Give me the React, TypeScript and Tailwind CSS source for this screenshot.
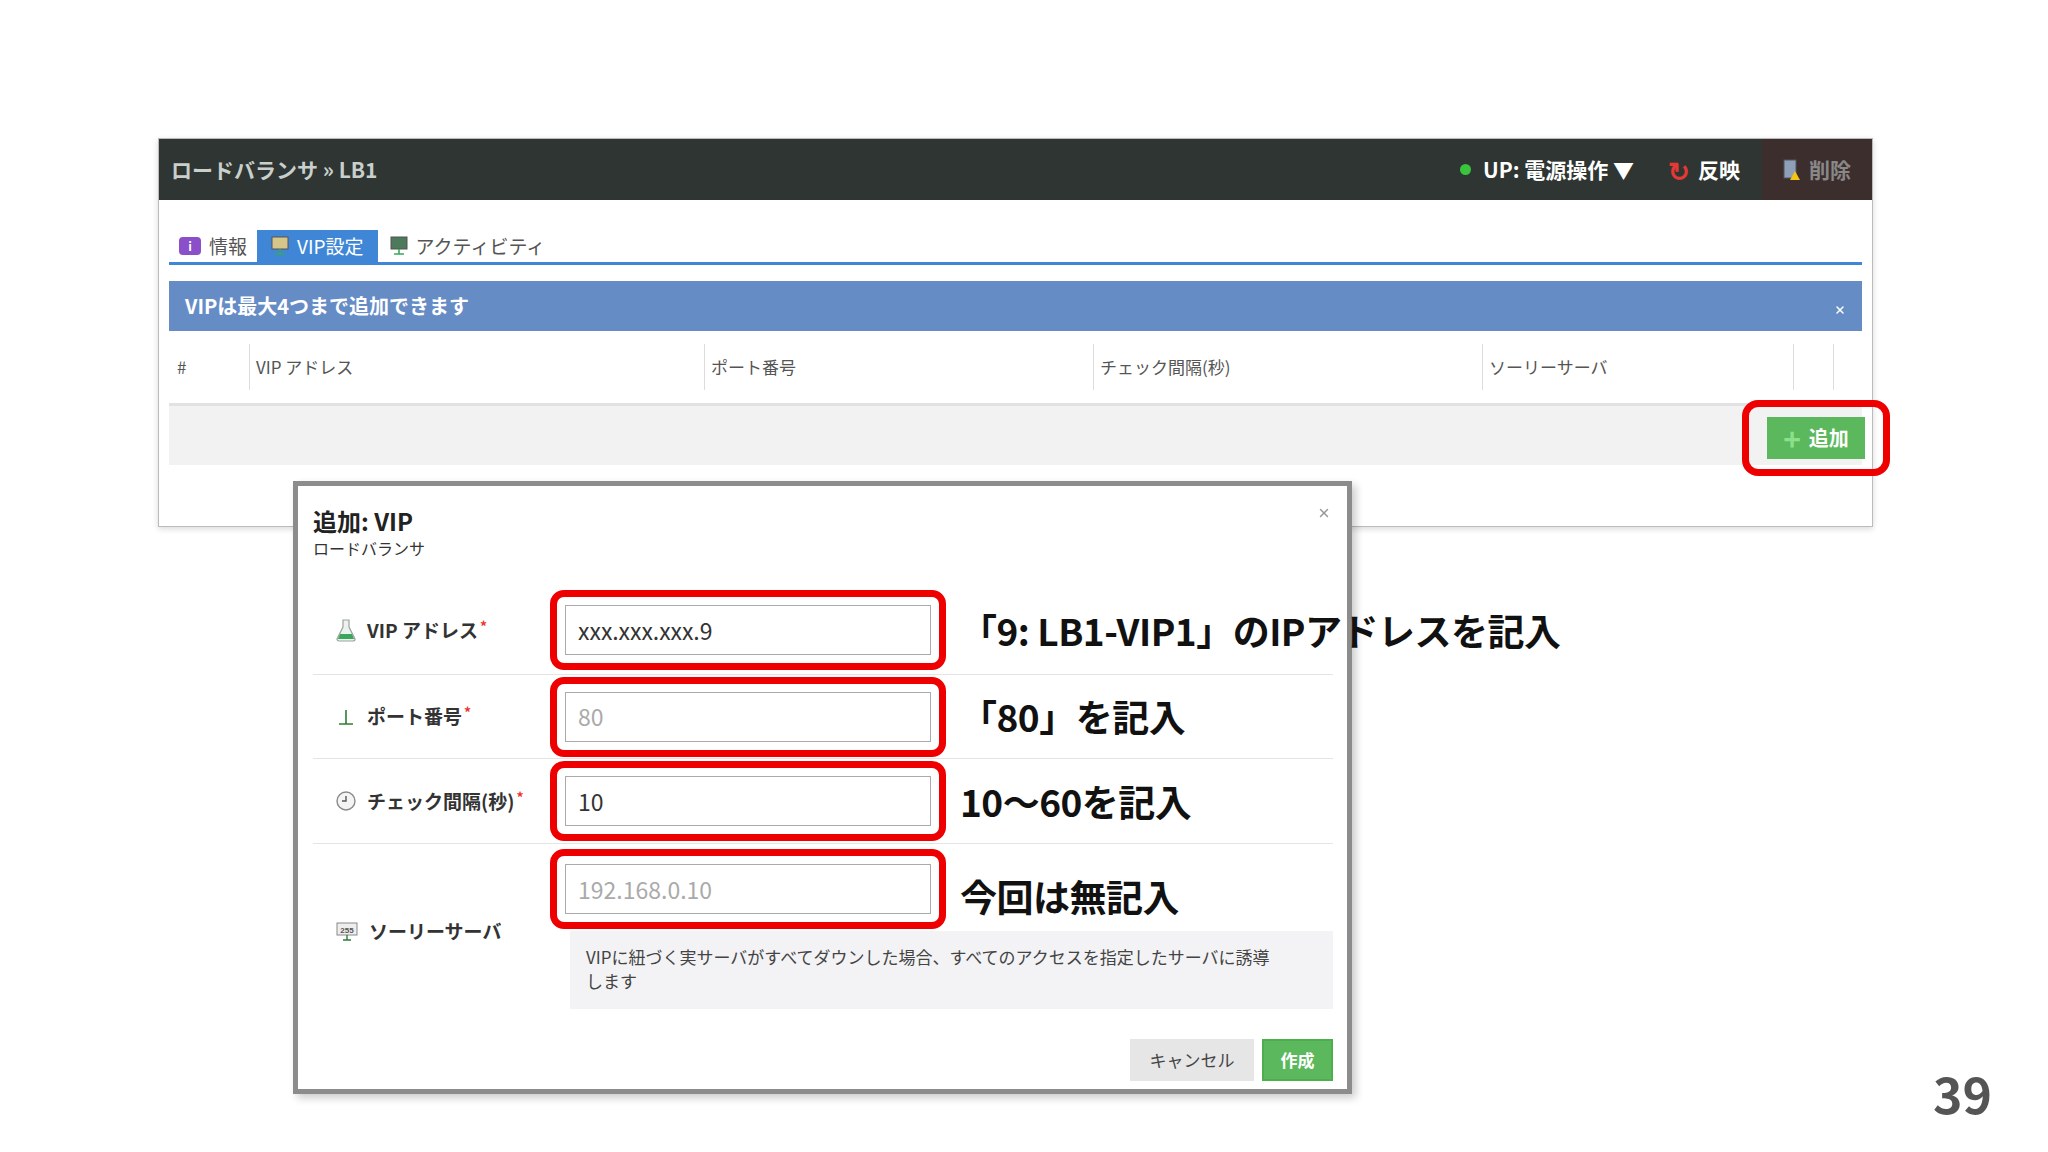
import { X } from 'lucide-react';

const font = { fontFamily: '"Noto Sans CJK JP", "Noto Sans", sans-serif' };

const FlaskIcon = () => (
  <svg width="22" height="24" viewBox="0 0 22 24">
    <path d="M8 2h6v7l6 12a2 2 0 0 1-2 2H4a2 2 0 0 1-2-2l6-12z" fill="#eef2ee" stroke="#9aa39c" strokeWidth="1.2" />
    <path d="M5 16h12l2 5H3z" fill="#3aa75a" />
  </svg>
);

const PortIcon = () => (
  <svg width="22" height="22" viewBox="0 0 22 22">
    <path d="M11 4v14M4 18h14" stroke="#2e7d32" strokeWidth="1.6" />
  </svg>
);

const ClockIcon = () => (
  <svg width="22" height="22" viewBox="0 0 22 22">
    <circle cx="11" cy="11" r="9" fill="#f4f4f4" stroke="#8a8a8a" strokeWidth="1.4" />
    <path d="M11 6v5H7" stroke="#555" strokeWidth="1.4" fill="none" />
  </svg>
);

const SorryIcon = () => (
  <svg width="24" height="22" viewBox="0 0 24 22">
    <rect x="2" y="3" width="20" height="12" fill="#eee" stroke="#888" />
    <text x="12" y="12.5" fontSize="8" textAnchor="middle" fill="#555" fontFamily="Liberation Sans">255</text>
    <path d="M12 15v5M8 20h8" stroke="#2e7d32" strokeWidth="1.4" />
  </svg>
);

const Monitor = ({ screen }: { screen: string }) => (
  <svg width="18" height="20" viewBox="0 0 18 20">
    <rect x="1" y="1" width="16" height="12" fill={screen} stroke="#555" />
    <path d="M9 13v5M4 18h10" stroke="#3aa75a" strokeWidth="1.6" />
  </svg>
);

const Field = ({ value, muted }: { value: string; muted?: boolean }) => (
  <div className="shrink-0 w-[396px] rounded-[14px] border-[7px] border-[#ee0000] p-[8px]">
    <div className={`h-[50px] border border-[#aaa] bg-white px-3 flex items-center text-[23px] ${muted ? 'text-[#aaa]' : 'text-[#333]'}`}>
      {value}
    </div>
  </div>
);

const Note = ({ children }: { children: React.ReactNode }) => (
  <div className="ml-[14px] whitespace-nowrap text-[37px] font-bold text-[#111] leading-none tracking-[-0.5px]">{children}</div>
);

const Label = ({ icon, text, req }: { icon: React.ReactNode; text: string; req?: boolean }) => (
  <div className="shrink-0 w-[237px] whitespace-nowrap flex items-center gap-[10px] pl-[22px] text-[19px] font-bold text-[#333]">
    {icon}
    <span>{text}</span>
    {req && <span className="text-[#e33] text-[14px] -ml-2 -mt-2">*</span>}
  </div>
);

export default function App() {
  return (
    <div className="relative w-[2048px] h-[1152px] bg-white overflow-hidden" style={font}>
      {/* Main panel */}
      <div className="ml-[158px] mt-[138px] w-[1715px] h-[389px] border border-[#bbb] bg-white shadow-[0_2px_6px_rgba(0,0,0,0.15)]">
        <div className="h-[61px] bg-[#2e3532] flex items-center justify-between pl-[12px]">
          <div className="text-[21px] font-bold text-[#c9cfcc]">ロードバランサ » LB1</div>
          <div className="flex items-center h-full text-[21px] font-bold text-white">
            <span className="w-[11px] h-[11px] rounded-full bg-[#39c43c] mr-[12px]" />
            <span>UP: 電源操作 ▼</span>
            <span className="ml-[34px] text-[#e53935] text-[26px]">↻</span>
            <span className="ml-[8px]">反映</span>
            <div className="ml-[22px] h-full w-[110px] bg-[#3d2e2e] flex items-center justify-center gap-2 text-[#888]">
              <svg width="18" height="22" viewBox="0 0 18 22">
                <rect x="1" y="1" width="12" height="18" fill="#8da0b8" stroke="#556" />
                <path d="M12 12l5 9H7z" fill="#f3c316" />
              </svg>
              <span>削除</span>
            </div>
          </div>
        </div>
        <div className="px-[10px]">
          <div className="mt-[30px] flex items-end border-b-[3px] border-[#3f87d6] h-[35px] text-[19px]">
            <div className="flex items-center gap-[8px] px-[10px] h-full text-[#555]">
              <span className="w-[22px] h-[18px] rounded-[4px] bg-[#8a4fc9] text-white text-[12px] flex items-center justify-center font-bold">i</span>
              情報
            </div>
            <div className="flex items-center gap-[8px] px-[14px] h-full bg-[#3f87d6] text-white">
              <Monitor screen="#d6c68a" />
              VIP設定
            </div>
            <div className="flex items-center gap-[8px] px-[12px] h-full text-[#555]">
              <Monitor screen="#4c7a5a" />
              アクティビティ
            </div>
          </div>
          <div className="mt-[16px] h-[50px] bg-[#668cc6] flex items-center justify-between px-[16px] text-white font-bold text-[20px]">
            <span>VIPは最大4つまで追加できます</span>
            <X className="w-[12px] h-[12px] mt-[8px]" strokeWidth={3} />
          </div>
          <div className="h-[75px] flex items-center text-[17px] text-[#555] border-b-[3px] border-[#e2e2e2]">
            <div className="w-[80px] pl-[8px]">#</div>
            <div className="w-[455px] h-[46px] border-l border-[#ddd] pl-[6px] flex items-center">VIP アドレス</div>
            <div className="w-[389px] h-[46px] border-l border-[#ddd] pl-[6px] flex items-center">ポート番号</div>
            <div className="w-[389px] h-[46px] border-l border-[#ddd] pl-[6px] flex items-center">チェック間隔(秒)</div>
            <div className="w-[311px] h-[46px] border-l border-[#ddd] pl-[6px] flex items-center">ソーリーサーバ</div>
            <div className="w-[40px] h-[46px] border-l border-[#ddd]" />
            <div className="h-[46px] border-l border-[#ddd]" />
          </div>
          <div className="h-[59px] bg-[#f2f2f2] flex items-center justify-end pr-[6px]">
            <div className="rounded-[16px] border-[7px] border-[#ee0000] px-[18px] py-[10px] -mr-[34px] mt-[4px]">
              <div className="w-[98px] h-[42px] bg-[#5cb85c] flex items-center justify-center gap-[8px] text-white font-bold text-[20px]">
                <span className="text-[#8be08b] text-[30px] leading-none">+</span>
                追加
              </div>
            </div>
          </div>
        </div>
      </div>

      {/* Dialog */}
      <div className="absolute left-[293px] top-[481px] w-[1059px] h-[613px] border-[5px] border-[#8c8c8c] bg-white shadow-[4px_4px_8px_rgba(0,0,0,0.2)] px-[15px]">
        <X className="absolute right-[16px] top-[20px] w-[14px] h-[14px] text-[#999]" strokeWidth={2.5} />
        <div className="pt-[20px] text-[24px] font-bold text-[#222] leading-tight">追加: VIP</div>
        <div className="text-[16px] text-[#333]">ロードバランサ</div>
        <div className="mt-[26px] w-[1020px]">
          <div className="flex items-center h-[89px] border-b border-[#e4e4e4]">
            <Label icon={<FlaskIcon />} text="VIP アドレス" req />
            <Field value="xxx.xxx.xxx.9" />
            <Note>「9: LB1-VIP1」のIPアドレスを記入</Note>
          </div>
          <div className="flex items-center h-[84px] border-b border-[#e4e4e4]">
            <Label icon={<PortIcon />} text="ポート番号" req />
            <Field value="80" muted />
            <Note>「80」を記入</Note>
          </div>
          <div className="flex items-center h-[85px] border-b border-[#e4e4e4]">
            <Label icon={<ClockIcon />} text="チェック間隔(秒)" req />
            <Field value="10" />
            <Note>10〜60を記入</Note>
          </div>
          <div className="flex pt-[5px]">
            <div className="pt-[68px]">
              <Label icon={<SorryIcon />} text="ソーリーサーバ" />
            </div>
            <div className="flex-1">
              <div className="flex items-center">
                <Field value="192.168.0.10" muted />
                <Note><span className="block mt-[14px]">今回は無記入</span></Note>
              </div>
              <div className="ml-[20px] mt-[2px] h-[78px] bg-[#f3f3f5] px-[16px] py-[14px] text-[17px] text-[#444] leading-[24px]">
                VIPに紐づく実サーバがすべてダウンした場合、すべてのアクセスを指定したサーバに誘導
                <br />
                します
              </div>
            </div>
          </div>
          <div className="flex justify-end gap-[8px] mt-[30px]">
            <div className="w-[124px] h-[42px] bg-[#e6e6e6] flex items-center justify-center text-[17px] text-[#444]">キャンセル</div>
            <div className="w-[71px] h-[42px] bg-[#5cb85c] border-2 border-[#4cae4c] flex items-center justify-center text-[17px] font-bold text-white">作成</div>
          </div>
        </div>
      </div>

      <div className="absolute left-[1933px] top-[1067px] text-[50px] font-bold text-[#555] leading-none">39</div>
    </div>
  );
}
